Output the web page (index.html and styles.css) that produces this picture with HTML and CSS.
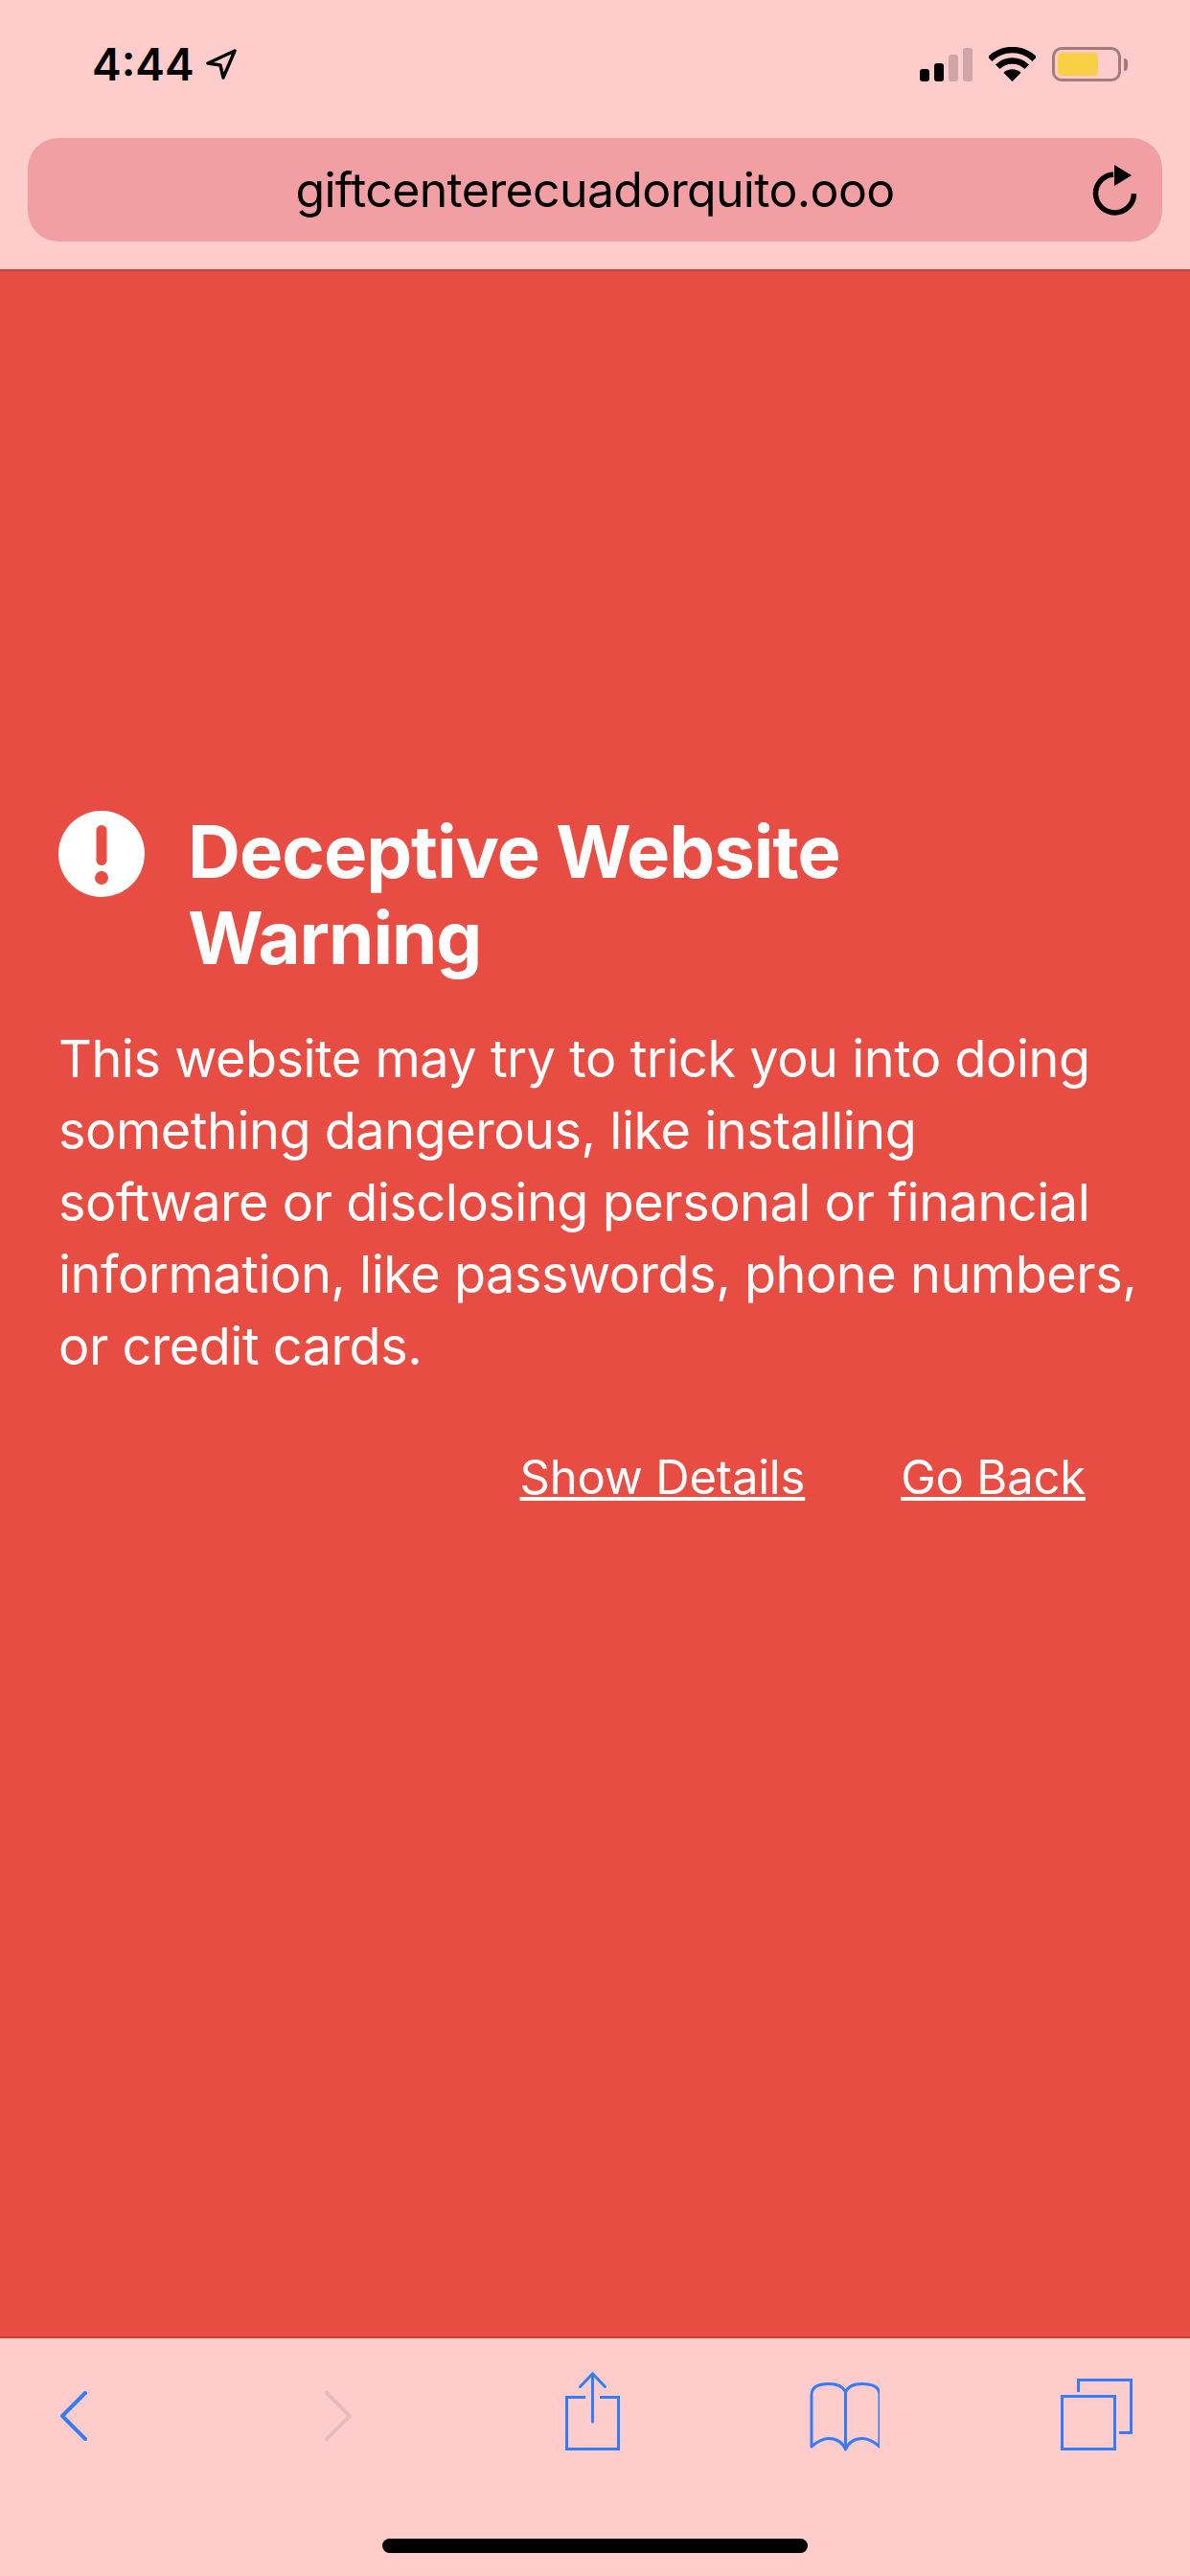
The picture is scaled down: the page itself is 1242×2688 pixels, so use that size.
FILE: index.html
```html
<!DOCTYPE html>
<html lang="en">
<head>
    <meta charset="UTF-8">
    <title>Deceptive Website Warning</title>
    <link rel="stylesheet" href="styles.css">
</head>
<body>
    <div class="page">
        <header class="topbar">
            <div class="status">
                <div class="clock">
                    <span class="time">4:44</span>
                    <svg class="location" width="32" height="32" viewBox="0 0 32 32">
                        <path d="M30 2 L2 15 L15 17 L18 30 Z" fill="none" stroke="#000" stroke-width="3.4" stroke-linejoin="round"/>
                    </svg>
                </div>
                <div class="indicators">
                    <div class="signal">
                        <span class="bar bar1"></span>
                        <span class="bar bar2"></span>
                        <span class="bar bar3 off"></span>
                        <span class="bar bar4 off"></span>
                    </div>
                    <svg class="wifi" width="49" height="36" viewBox="0 0 49 36">
                        <path d="M1.2 12.7 A33 33 0 0 1 47.8 12.7" fill="none" stroke="#000" stroke-width="6.5"/>
                        <path d="M9.3 20.8 A21.5 21.5 0 0 1 39.7 20.8" fill="none" stroke="#000" stroke-width="6.5"/>
                        <path d="M24.5 36 L15.5 27 A12.7 12.7 0 0 1 33.5 27 Z" fill="#000"/>
                    </svg>
                    <div class="battery">
                        <div class="battery-body"><span class="battery-fill"></span></div>
                        <span class="battery-nub"></span>
                    </div>
                </div>
            </div>
            <div class="urlbar">
                <span class="url">giftcenterecuadorquito.ooo</span>
                <svg class="reload" width="46" height="54" viewBox="0 0 46 54">
                    <path d="M22 10 A20 20 0 1 0 43.5 30" fill="none" stroke="#000" stroke-width="5.5"/>
                    <path d="M23 0 L41 11 L23 22 Z" fill="#000"/>
                </svg>
            </div>
        </header>

        <main class="warning">
            <div class="warning-head">
                <svg class="warning-icon" width="90" height="90" viewBox="0 0 90 90">
                    <circle cx="45" cy="45" r="45" fill="#fff"/>
                    <rect x="39.5" y="15" width="11" height="42" rx="5.5" fill="#e84d44"/>
                    <circle cx="45" cy="70" r="7" fill="#e84d44"/>
                </svg>
                <h1>Deceptive Website<br>Warning</h1>
            </div>
            <p>This website may try to trick you into doing<br>something dangerous, like installing<br>software or disclosing personal or financial<br>information, like passwords, phone numbers,<br>or credit cards.</p>
            <div class="actions">
                <a href="#">Show Details</a>
                <a href="#">Go Back</a>
            </div>
        </main>

        <footer class="toolbar">
            <div class="tools">
                <svg class="tool" width="80" height="88" viewBox="0 0 80 88">
                    <path d="M52 23 L28 47 L52 71" fill="none" stroke="#357cf8" stroke-width="4" stroke-linecap="round" stroke-linejoin="round"/>
                </svg>
                <svg class="tool" width="80" height="88" viewBox="0 0 80 88">
                    <path d="M37 23 L61 47 L37 71" fill="none" stroke="#e3bdbc" stroke-width="4" stroke-linecap="round" stroke-linejoin="round"/>
                </svg>
                <svg class="tool" width="80" height="88" viewBox="0 0 80 88">
                    <path d="M40 27.5 H20.5 V81.5 H74.5 V27.5 H55" fill="none" stroke="#357cf8" stroke-width="3"/>
                    <path d="M47.5 53 V3 M34.5 16.5 L47.5 3 L60.5 16.5" fill="none" stroke="#357cf8" stroke-width="3" stroke-linecap="round"/>
                </svg>
                <svg class="tool" width="80" height="88" viewBox="0 0 80 88">
                    <path d="M44.5 22 C42 16 35 13.5 27 13.5 C16 13.5 9 17 9 25 V79 C16 73 21 70.5 27 70.5 C35 70.5 41 74 44.5 82 C48 74 54 70.5 62 70.5 C68 70.5 73 73 80 79 V25 C80 17 73 13.5 62 13.5 C54 13.5 47 16 44.5 22 V82" fill="none" stroke="#357cf8" stroke-width="3" stroke-linejoin="round" stroke-linecap="round"/>
                </svg>
                <svg class="tool" width="80" height="88" viewBox="0 0 80 88">
                    <rect x="3.5" y="26.5" width="55" height="55" fill="none" stroke="#357cf8" stroke-width="3"/>
                    <path d="M20.5 22 V9.5 H75.5 V64.5 H63" fill="none" stroke="#357cf8" stroke-width="3"/>
                </svg>
            </div>
            <div class="home-indicator"></div>
        </footer>
    </div>
</body>
</html>
```

FILE: styles.css
```css
* {
    box-sizing: border-box;
}

body {
    margin: 0;
    font-family: Inter, "Liberation Sans", sans-serif;
    background-color: #e84d44;
}

.page {
    display: flex;
    flex-direction: column;
    width: 1242px;
    height: 2688px;
    overflow: hidden;
}

.topbar {
    height: 283px;
    padding-top: 49px;
    background: #fecccb;
    border-bottom: 2px solid #c0423b;
}

.status {
    display: flex;
    justify-content: space-between;
    height: 95px;
    padding: 0 65px 0 96px;
}

.clock {
    display: flex;
    align-items: flex-start;
    gap: 12px;
}

.time {
    font-size: 46px;
    font-weight: 600;
    line-height: 36px;
    color: #000;
}

.location {
    margin-top: 2px;
}

.indicators {
    display: flex;
    align-items: flex-start;
    gap: 17px;
}

.signal {
    display: flex;
    align-items: flex-end;
    gap: 5px;
    height: 36px;
}

.bar {
    width: 10px;
    background: #000;
    border-radius: 3px;
}

.bar.off {
    background: #cfa5a5;
}

.bar1 {
    height: 13px;
}

.bar2 {
    height: 19px;
}

.bar3 {
    height: 28px;
}

.bar4 {
    height: 35px;
}

.battery {
    display: flex;
    align-items: center;
    gap: 3px;
}

.battery-body {
    width: 72px;
    height: 36px;
    padding: 3px;
    border: 3px solid #a47b7b;
    border-radius: 10px;
}

.battery-fill {
    display: block;
    width: 42px;
    height: 100%;
    background: #f9d045;
    border-radius: 4px;
}

.battery-nub {
    width: 4px;
    height: 13px;
    background: #a47b7b;
    border-radius: 0 4px 4px 0;
}

.urlbar {
    position: relative;
    display: flex;
    align-items: center;
    justify-content: center;
    height: 108px;
    margin: 0 29px;
    background: #f19fa2;
    border-radius: 32px;
}

.url {
    font-size: 50px;
    letter-spacing: -0.65px;
    color: #000;
}

.reload {
    position: absolute;
    right: 27px;
    top: 28px;
}

.warning {
    flex: 1;
    padding: 560px 61px 0 61px;
    color: #fff;
    background: #e84d44;
}

.warning-head {
    display: flex;
    align-items: flex-start;
    gap: 45px;
}

.warning h1 {
    margin: 0;
    font-size: 76px;
    font-weight: 700;
    line-height: 90px;
    letter-spacing: -1px;
}

.warning-icon {
    flex-shrink: 0;
    margin-top: 3px;
}

.warning p {
    margin: 44px 0 0;
    font-size: 54px;
    font-weight: 380;
    line-height: 75px;
    letter-spacing: -0.48px;
    white-space: nowrap;
}

.actions {
    display: flex;
    justify-content: flex-end;
    gap: 100px;
    margin-top: 70px;
    padding-right: 48px;
}

.actions a {
    font-size: 49px;
    font-weight: 380;
    letter-spacing: -0.2px;
    color: #fff;
}

.toolbar {
    height: 250px;
    padding-top: 34px;
    background: #fecccb;
    border-top: 2px solid #c0423b;
}

.tools {
    display: flex;
    justify-content: space-between;
    padding: 0 57px 0 37px;
}

.home-indicator {
    width: 444px;
    height: 15px;
    margin: 87px auto 0;
    background: #000;
    border-radius: 8px;
}
```
